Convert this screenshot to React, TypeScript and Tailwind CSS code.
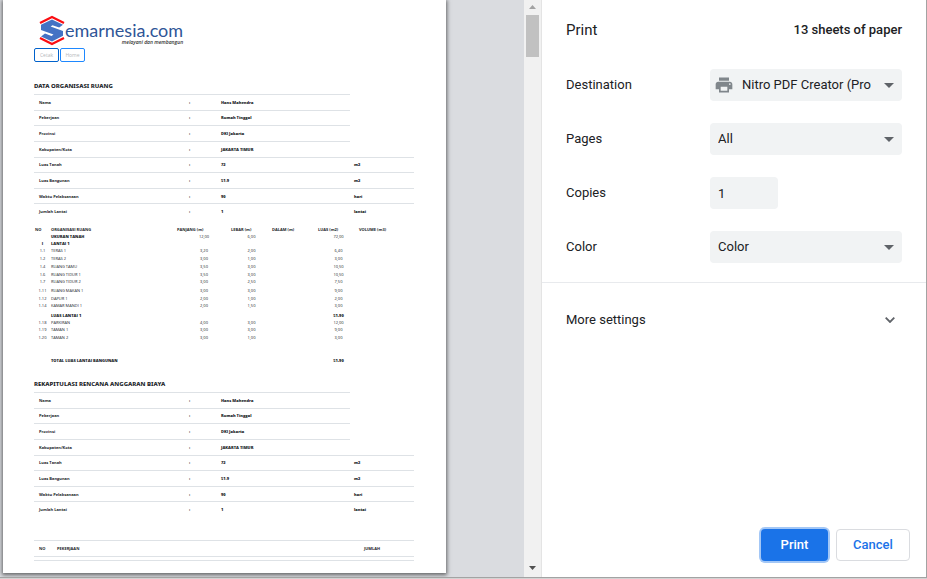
import { useState } from "react";
import type { ReactNode } from "react";

type InfoRow = [label: string, value: string, unit?: string];

const infoRows: InfoRow[] = [
  ["Nama", "Hans Mahendra"],
  ["Pekerjaan", "Rumah Tinggal"],
  ["Provinsi", "DKI Jakarta"],
  ["Kabupaten/Kota", "JAKARTA TIMUR"],
  ["Luas Tanah", "72", "m2"],
  ["Luas Bangunan", "51.9", "m2"],
  ["Waktu Pelaksanaan", "90", "hari"],
  ["Jumlah Lantai", "1", "lantai"],
];

interface RoomRow {
  no: string;
  name: string;
  panjang?: string;
  lebar?: string;
  luas?: string;
  bold?: boolean;
  height: string;
}

const roomRows: RoomRow[] = [
  { no: "", name: "UKURAN TANAH", panjang: "12,00", lebar: "6,00", luas: "72,00", bold: true, height: "h-[7px]" },
  { no: "I", name: "LANTAI 1", bold: true, height: "h-[7px]" },
  { no: "1.1", name: "TERAS 1", panjang: "3,20", lebar: "2,00", luas: "6,40", height: "h-[7px]" },
  { no: "1.2", name: "TERAS 2", panjang: "3,00", lebar: "1,00", luas: "3,00", height: "h-[8px]" },
  { no: "1.4", name: "RUANG TAMU", panjang: "3,50", lebar: "3,00", luas: "10,50", height: "h-[8px]" },
  { no: "1.6", name: "RUANG TIDUR 1", panjang: "3,50", lebar: "3,00", luas: "10,50", height: "h-[8px]" },
  { no: "1.7", name: "RUANG TIDUR 2", panjang: "3,00", lebar: "2,50", luas: "7,50", height: "h-[7px]" },
  { no: "1.11", name: "RUANG MAKAN 1", panjang: "3,00", lebar: "3,00", luas: "9,00", height: "h-[9px]" },
  { no: "1.12", name: "DAPUR 1", panjang: "2,00", lebar: "1,00", luas: "2,00", height: "h-[8px]" },
  { no: "1.14", name: "KAMAR MANDI 1", panjang: "2,00", lebar: "1,50", luas: "3,00", height: "h-[7px]" },
  { no: "", name: "LUAS LANTAI 1", luas: "51,90", bold: true, height: "h-[10px]" },
  { no: "1.18", name: "PARKIRAN", panjang: "4,00", lebar: "3,00", luas: "12,00", height: "h-[7px]" },
  { no: "1.19", name: "TAMAN 1", panjang: "3,00", lebar: "3,00", luas: "9,00", height: "h-[7px]" },
  { no: "1.20", name: "TAMAN 2", panjang: "3,00", lebar: "1,00", luas: "3,00", height: "h-[8px]" },
  { no: "", name: "TOTAL LUAS LANTAI BANGUNAN", luas: "51,90", bold: true, height: "h-[23px]" },
];

function SectionTitle({ children }: { children: ReactNode }) {
  return <h2 className="h-3 font-['Noto_Sans','Open_Sans',sans-serif] text-[6px] leading-[8px] font-extrabold text-[#212529]">{children}</h2>;
}

function InfoTable() {
  return (
    <table className="h-[125px] w-full table-fixed border-separate border-spacing-0 text-[4px] leading-[6px] font-extrabold">
      <colgroup>
        <col className="w-[150px]" />
        <col className="w-8" />
        <col className="w-[134px]" />
        <col />
      </colgroup>
      <tbody>
        {infoRows.map(([label, value, unit]) => (
          <tr key={label}>
            <th scope="row" className="border-t border-[#dee2e6] px-[5px] pt-px pb-0 text-left">{label}</th>
            <td className="border-t border-[#dee2e6] px-[5px] pt-px pb-0">:</td>
            <td className="border-t border-[#dee2e6] px-[5px] pt-px pb-0">{value}</td>
            {unit && <td className="border-t border-[#dee2e6] px-1 pt-px pb-0">{unit}</td>}
          </tr>
        ))}
      </tbody>
    </table>
  );
}

function RoomTable() {
  return (
    <table className="w-full table-fixed border-separate border-spacing-0 text-[4px] leading-[7px] text-[#212529]">
      <colgroup>
        <col className="w-[17px]" />
        <col className="w-[126px]" />
        <col className="w-[54px]" />
        <col className="w-[41px]" />
        <col className="w-[46px]" />
        <col className="w-[41px]" />
        <col />
      </colgroup>
      <thead>
        <tr className="h-[7px] text-left font-extrabold">
          <th className="p-0 pl-px">NO</th>
          <th className="p-0">ORGANISASI RUANG</th>
          <th className="p-0">PANJANG (m)</th>
          <th className="p-0">LEBAR (m)</th>
          <th className="p-0">DALAM (m)</th>
          <th className="p-0">LUAS (m2)</th>
          <th className="p-0">VOLUME (m3)</th>
        </tr>
      </thead>
      <tbody>
        {roomRows.map((r) => (
          <tr key={r.name} className={r.height}>
            <td className={r.bold ? "p-0 text-center align-bottom font-extrabold" : "p-0 text-center align-bottom"}>{r.no}</td>
            <td className={r.bold ? "p-0 align-bottom font-extrabold" : "p-0 align-bottom"}>{r.name}</td>
            <td className="p-0 text-center align-bottom">{r.panjang}</td>
            <td className="p-0 text-center align-bottom">{r.lebar}</td>
            <td className="p-0" />
            <td className={r.bold && !r.panjang ? "p-0 text-center align-bottom font-extrabold" : "p-0 text-center align-bottom"}>{r.luas}</td>
            <td className="p-0" />
          </tr>
        ))}
      </tbody>
    </table>
  );
}

function Logo() {
  return (
    <div className="flex h-8 pl-[5px]">
      <svg viewBox="0 0 26 32" className="h-8 w-[26px] shrink-0" aria-hidden="true">
        <path d="M1 9 13 3 25 9" fill="none" stroke="#fb0d12" strokeWidth="2.2" />
        <path d="M1 24 13 30 25 24" fill="none" stroke="#fb0d12" strokeWidth="2.2" />
        <path
          d="M13 5.400 24 10.800 20.200 13.500 13.500 11.300 11.600 12.500 24 17V21.800L13 27.600 2 22.400 6 19.600 12.500 22 14.500 20.600 2 16V10.800Z"
          fill="#4472c4"
        />
      </svg>
      <div className="flex flex-col whitespace-nowrap">
        <span className="pt-[7px] font-[Lato,'Open_Sans',sans-serif] text-[18px] leading-[18px] text-[#2f5597]">emarnesia.com</span>
        <span className="self-end text-[5px] leading-[6px] font-semibold italic text-[#333]">melayani dan membangun</span>
      </div>
    </div>
  );
}

function PreviewPage() {
  return (
    <article className="mr-[78px] ml-[3px] min-w-0 flex-1 bg-white pr-8 pl-[31px] font-['Open_Sans','Noto_Sans',sans-serif] text-[#212529] shadow-[0_1px_4px_1px_rgba(0,0,0,0.55)]">
      <header className="flex h-20 flex-col items-start pt-[14px]">
        <Logo />
        <div className="mt-[2px] flex gap-px text-[5px] leading-[12px] text-[#b5b8bb]">
          <button type="button" className="h-[14px] w-[25px] rounded-[2px] border border-[#0062cc]">Cetak</button>
          <button type="button" className="h-[14px] w-[25px] rounded-[2px] border border-[#1e88ff]">Home</button>
        </div>
      </header>
      <section className="pt-[2px]">
        <SectionTitle>DATA ORGANISASI RUANG</SectionTitle>
        <InfoTable />
        <div className="pt-[7px]">
          <RoomTable />
        </div>
      </section>
      <section className="pt-4">
        <SectionTitle>REKAPITULASI RENCANA ANGGARAN BIAYA</SectionTitle>
        <InfoTable />
        <table className="mt-[23px] w-full table-fixed border-separate border-spacing-0 text-[4px] leading-[6px]">
          <colgroup>
            <col className="w-[18px]" />
            <col />
            <col className="w-[84px]" />
          </colgroup>
          <thead>
            <tr className="h-4 text-left font-extrabold">
              <th className="border-t border-[#dee2e6] px-[5px] py-0">NO</th>
              <th className="border-t border-[#dee2e6] px-[5px] py-0">PEKERJAAN</th>
              <th className="border-t border-[#dee2e6] py-0 text-center">JUMLAH</th>
            </tr>
          </thead>
          <tbody>
            <tr className="h-[5px]">
              <td colSpan={3} className="border-y border-[#dee2e6] p-0" />
            </tr>
          </tbody>
        </table>
      </section>
    </article>
  );
}

function Scrollbar() {
  return (
    <div className="flex w-[18px] shrink-0 flex-col items-center border-r border-[#e4e4e4] bg-[#f1f1f1]" aria-hidden="true">
      <svg viewBox="0 0 17 15" className="h-[15px] w-[17px] shrink-0">
        <path d="M5 9h7L8.500 5Z" fill="#a3a3a3" />
      </svg>
      <div className="h-[42px] w-[13px] bg-[#c1c1c1]" />
      <svg viewBox="0 0 17 17" className="mt-auto h-[17px] w-[17px] shrink-0">
        <path d="M5 6h7L8.500 10Z" fill="#505050" />
      </svg>
    </div>
  );
}

function Caret() {
  return (
    <svg viewBox="0 0 10 5" className="pointer-events-none absolute top-[14px] right-2 h-[5px] w-[10px]" aria-hidden="true">
      <path d="M0 0h10L5 5Z" fill="#5f6368" />
    </svg>
  );
}

function PrinterIcon() {
  return (
    <svg viewBox="0 0 24 24" className="pointer-events-none absolute top-[6px] left-1 size-5" aria-hidden="true">
      <path
        d="M19 8H5c-1.660 0-3 1.340-3 3v6h4v4h12v-4h4v-6c0-1.660-1.340-3-3-3zm-3 11H8v-5h8v5zm3-7c-.55 0-1-.45-1-1s.45-1 1-1 1 .45 1 1-.45 1-1 1zm-1-9H6v4h12V3z"
        fill="#80868b"
      />
    </svg>
  );
}

function Setting({ id, label, children }: { id: string; label: string; children: ReactNode }) {
  return (
    <div className="flex h-8 items-center">
      <label htmlFor={id} className="w-36 shrink-0">{label}</label>
      <div className="min-w-0 flex-1">{children}</div>
    </div>
  );
}

function Sidebar() {
  const [copies, setCopies] = useState("1");
  return (
    <aside className="flex w-[384px] shrink-0 flex-col bg-white text-[13px] leading-5 text-[#202124]">
      <header className="flex h-[69px] items-start justify-between pt-5 pr-6 pl-6">
        <h1 className="text-[15px]">Print</h1>
        <span className="font-medium">13 sheets of paper</span>
      </header>
      <form className="flex flex-col gap-[22px] border-b border-[#e8eaed] px-6 pb-[19px]">
        <Setting id="destination" label="Destination">
          <div className="relative">
            <select id="destination" className="block h-8 w-full appearance-none rounded bg-[#f1f3f4] pr-[31px] pl-8">
              <option>Nitro PDF Creator (Pro</option>
            </select>
            <PrinterIcon />
            <Caret />
          </div>
        </Setting>
        <Setting id="pages" label="Pages">
          <div className="relative">
            <select id="pages" className="block h-8 w-full appearance-none rounded bg-[#f1f3f4] pr-[31px] pl-2">
              <option>All</option>
            </select>
            <Caret />
          </div>
        </Setting>
        <Setting id="copies" label="Copies">
          <input
            id="copies"
            inputMode="numeric"
            value={copies}
            onChange={(e) => setCopies(e.target.value)}
            className="block h-8 w-[68px] rounded bg-[#f1f3f4] px-2"
          />
        </Setting>
        <Setting id="color" label="Color">
          <div className="relative">
            <select id="color" className="block h-8 w-full appearance-none rounded bg-[#f1f3f4] pr-[31px] pl-2">
              <option>Color</option>
            </select>
            <Caret />
          </div>
        </Setting>
      </form>
      <button type="button" className="flex h-[74px] items-center justify-between pr-[31px] pl-6 text-left">
        More settings
        <svg viewBox="0 0 10 6" className="h-[6px] w-[10px]" aria-hidden="true">
          <path d="M.7.7 5 5 9.300.7" fill="none" stroke="#5f6368" strokeWidth="1.8" />
        </svg>
      </button>
      <footer className="mt-auto flex justify-end gap-2 pr-4 pb-4">
        <button type="button" className="h-8 w-[67px] rounded bg-[#1a73e8] font-medium text-white shadow-[0_0_0_2px_rgba(26,115,232,0.4)]">
          Print
        </button>
        <button type="button" className="h-8 w-[74px] rounded border border-[#dadce0] font-medium text-[#1a73e8]">
          Cancel
        </button>
      </footer>
    </aside>
  );
}

export default function App() {
  return (
    <div className="flex h-screen flex-col bg-[#d3d3d3] font-[Roboto,'Liberation_Sans',sans-serif]">
      <main className="mb-px flex min-h-0 flex-1 border-r border-b border-[#a3a3a3] bg-[#dadce0]">
        <div className="flex min-w-0 flex-1 overflow-hidden pb-1">
          <PreviewPage />
        </div>
        <Scrollbar />
        <Sidebar />
      </main>
    </div>
  );
}
